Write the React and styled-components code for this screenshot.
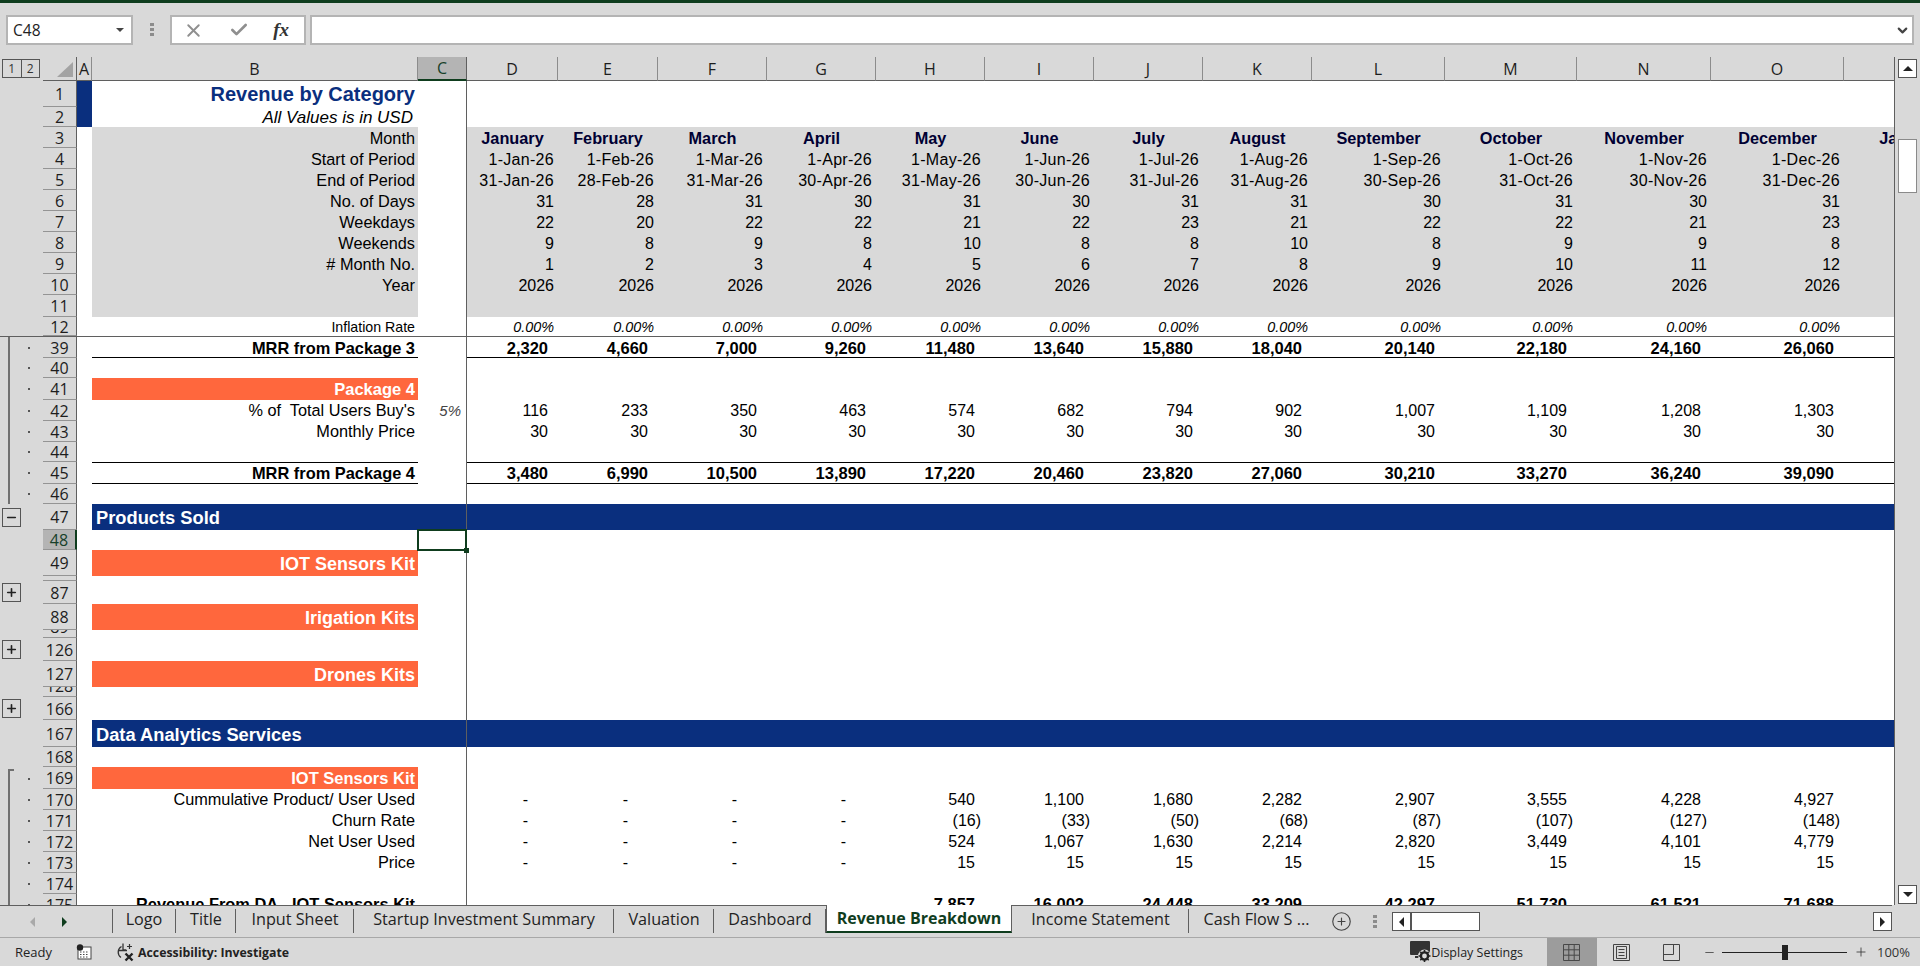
import React from "react"
import styled, { createGlobalStyle, css } from "styled-components"
import { X, Check, ChevronDown, CirclePlus, Plus, Minus } from "lucide-react"

const GREY = "#d9d9d9"
const NAVY = "#0a2f7e"
const ORANGE = "#ff673d"
const LINE = "#5f5f5f"
const DARK_GREEN = "#0f3d1e"

const COLS = [91, 100, 109, 109, 109, 109, 109, 109, 133, 132, 134, 133, 133]
const LETTERS = ["D", "E", "F", "G", "H", "I", "J", "K", "L", "M", "N", "O", ""]

const dash = ["-", "-", "-", "-"]
const r = (list) => list.map((v) => String(v))

const ROWS = [
  { n: 1, h: 26, a: NAVY, label: "Revenue by Category", kind: "title" },
  { n: 2, h: 20, nudge: true, a: NAVY, label: "All Values is in USD", kind: "note" },
  { n: 3, h: 21, nudge: true, fill: GREY, label: "Month", valueKind: "month",
    values: ["January", "February", "March", "April", "May", "June", "July", "August", "September", "October", "November", "December", "January"] },
  { n: 4, h: 21, nudge: true, fill: GREY, label: "Start of Period", valueKind: "date",
    values: ["1-Jan-26", "1-Feb-26", "1-Mar-26", "1-Apr-26", "1-May-26", "1-Jun-26", "1-Jul-26", "1-Aug-26", "1-Sep-26", "1-Oct-26", "1-Nov-26", "1-Dec-26"] },
  { n: 5, h: 21, nudge: true, fill: GREY, label: "End of Period", valueKind: "date",
    values: ["31-Jan-26", "28-Feb-26", "31-Mar-26", "30-Apr-26", "31-May-26", "30-Jun-26", "31-Jul-26", "31-Aug-26", "30-Sep-26", "31-Oct-26", "30-Nov-26", "31-Dec-26"] },
  { n: 6, h: 21, nudge: true, fill: GREY, label: "No. of Days", valueKind: "plain", values: r([31, 28, 31, 30, 31, 30, 31, 31, 30, 31, 30, 31]) },
  { n: 7, h: 21, nudge: true, fill: GREY, label: "Weekdays", valueKind: "plain", values: r([22, 20, 22, 22, 21, 22, 23, 21, 22, 22, 21, 23]) },
  { n: 8, h: 21, nudge: true, fill: GREY, label: "Weekends", valueKind: "plain", values: r([9, 8, 9, 8, 10, 8, 8, 10, 8, 9, 9, 8]) },
  { n: 9, h: 21, nudge: true, fill: GREY, label: "# Month No.", valueKind: "plain", values: r([1, 2, 3, 4, 5, 6, 7, 8, 9, 10, 11, 12]) },
  { n: 10, h: 21, nudge: true, fill: GREY, label: "Year", valueKind: "plain", values: Array(12).fill("2026") },
  { n: 11, h: 22, fill: GREY },
  { n: 12, h: 20, freeze: true, label: "Inflation Rate", kind: "small", valueKind: "rate", values: Array(12).fill("0.00%") },
  { n: 39, h: 21, nudge: true, dot: true, bar: true, label: "MRR from Package 3", kind: "bold", bottom: true, valueKind: "total",
    values: ["2,320", "4,660", "7,000", "9,260", "11,480", "13,640", "15,880", "18,040", "20,140", "22,180", "24,160", "26,060"] },
  { n: 40, h: 20, dot: true, bar: true },
  { n: 41, h: 22, dot: true, bar: true, label: "Package 4", kind: "band", labelFill: ORANGE },
  { n: 42, h: 21, dot: true, bar: true, label: "% of  Total Users Buy's", share: "5%", valueKind: "acct",
    values: ["116", "233", "350", "463", "574", "682", "794", "902", "1,007", "1,109", "1,208", "1,303"] },
  { n: 43, h: 21, dot: true, bar: true, label: "Monthly Price", valueKind: "acct", values: Array(12).fill("30") },
  { n: 44, h: 20, dot: true, bar: true },
  { n: 45, h: 22, dot: true, bar: true, label: "MRR from Package 4", kind: "bold", top: true, bottom: true, valueKind: "total",
    values: ["3,480", "6,990", "10,500", "13,890", "17,220", "20,460", "23,820", "27,060", "30,210", "33,270", "36,240", "39,090"] },
  { n: 46, h: 20, dot: true, bar: true },
  { n: 47, h: 26, nudge: true, box: "minus", fill: NAVY, label: "Products Sold", kind: "head" },
  { n: 48, h: 20, selected: true },
  { n: 49, h: 26, nudge: true, label: "IOT Sensors Kit", kind: "bigband", labelFill: ORANGE },
  { n: 50, h: 5 },
  { n: 87, h: 23, box: "plus" },
  { n: 88, h: 26, nudge: true, label: "Irigation Kits", kind: "bigband", labelFill: ORANGE },
  { n: 89, h: 8 },
  { n: 126, h: 23, box: "plus" },
  { n: 127, h: 26, nudge: true, label: "Drones Kits", kind: "bigband", labelFill: ORANGE },
  { n: 128, h: 10 },
  { n: 166, h: 23, box: "plus" },
  { n: 167, h: 27, nudge: true, fill: NAVY, label: "Data Analytics Services", kind: "head" },
  { n: 168, h: 20 },
  { n: 169, h: 22, dot: true, bar: true, barStart: true, label: "IOT Sensors Kit", kind: "band", labelFill: ORANGE },
  { n: 170, h: 21, dot: true, bar: true, label: "Cummulative Product/ User Used", valueKind: "acct",
    values: [...dash, "540", "1,100", "1,680", "2,282", "2,907", "3,555", "4,228", "4,927"] },
  { n: 171, h: 21, dot: true, bar: true, label: "Churn Rate", valueKind: "acct",
    values: [...dash, "(16)", "(33)", "(50)", "(68)", "(87)", "(107)", "(127)", "(148)"] },
  { n: 172, h: 21, dot: true, bar: true, label: "Net User Used", valueKind: "acct",
    values: [...dash, "524", "1,067", "1,630", "2,214", "2,820", "3,449", "4,101", "4,779"] },
  { n: 173, h: 21, dot: true, bar: true, label: "Price", valueKind: "acct", values: [...dash, ...Array(8).fill("15")] },
  { n: 174, h: 21, dot: true, bar: true },
  { n: 175, h: 21, dot: true, bar: true, label: "Revenue From DA - IOT Sensors Kit", kind: "bold", valueKind: "total",
    values: [...dash, "7,857", "16,002", "24,448", "33,209", "42,297", "51,730", "61,521", "71,688"] },
]

const TABS = [
  { name: "Logo", w: 64 },
  { name: "Title", w: 60 },
  { name: "Input Sheet", w: 118 },
  { name: "Startup Investment Summary", w: 260 },
  { name: "Valuation", w: 100 },
  { name: "Dashboard", w: 112 },
  { name: "Revenue Breakdown", w: 186, active: true },
  { name: "Income Statement", w: 177 },
  { name: "Cash Flow S ...", w: 135, last: true },
]

const Global = createGlobalStyle`
  html, body { margin: 0; padding: 0; height: 100%; overflow: hidden; background: ${GREY}; }
  * { box-sizing: border-box; }
`

const Window = styled.div`
  width: 1920px;
  height: 966px;
  display: flex;
  flex-direction: column;
  background: ${GREY};
  overflow: hidden;
  font-family: "Liberation Sans", Arial, sans-serif;
  border-top: 3px solid ${DARK_GREEN};
`

/* formula bar */
const FormulaRow = styled.div`
  height: 54px;
  flex: none;
  display: flex;
  align-items: flex-start;
  padding: 12px 6px 0;
`
const Field = styled.div`
  height: 30px;
  background: #fff;
  border: 2px solid #b4b4b4;
  display: flex;
  align-items: center;
`
const NameBox = styled(Field)`
  width: 127px;
  justify-content: space-between;
  padding: 0 7px 0 5px;
  font: 15.5px "Open Sans", sans-serif;
  color: #222;
`
const Caret = styled.i`
  width: 0;
  height: 0;
  border-left: 4px solid transparent;
  border-right: 4px solid transparent;
  border-top: 4px solid #444;
`
const Handle = styled.div`
  display: flex;
  flex-direction: column;
  gap: 2px;
  margin: ${(p) => p.$margin};
  i {
    display: block;
    width: 4px;
    height: 3px;
    background: #8c8c8c;
  }
`
const FxBox = styled(Field)`
  width: 136px;
  margin-left: 16px;
  justify-content: space-between;
  padding: 0 15px 0 11px;
  color: #8f8f8f;
`
const FxText = styled.span`
  font: italic bold 19px "Liberation Serif", serif;
  color: #333;
`
const FormulaInput = styled(Field)`
  flex: 1;
  margin-left: 4px;
  justify-content: flex-end;
  padding-right: 2px;
  color: #444;
`

/* sheet */
const SheetArea = styled.div`
  height: 848px;
  flex: none;
  display: flex;
`
const Sheet = styled.div`
  width: 1895px;
  position: relative;
  overflow: hidden;
  border-right: 1px solid ${LINE};
`
const HeaderRow = styled.div`
  display: flex;
  height: 24px;
`
const LevelArea = styled.div`
  width: 43px;
  flex: none;
  padding: 2px 0 0 2px;
`
const Levels = styled.div`
  width: 38px;
  height: 19px;
  display: flex;
  border: 1px solid #555;
  font: 12px "Open Sans", sans-serif;
  color: #333;
  span {
    flex: 1;
    text-align: center;
    line-height: 17px;
  }
  span + span {
    border-left: 1px solid #555;
  }
`
const Corner = styled.div`
  width: 34px;
  flex: none;
  border-bottom: 1px solid ${LINE};
  border-right: 1px solid ${LINE};
  padding: 5px 0 0 14px;
  i {
    display: block;
    width: 0;
    height: 0;
    border-left: 16px solid transparent;
    border-bottom: 15px solid #a3a3a3;
  }
`
const ColHead = styled.div`
  width: ${(p) => p.$w}px;
  flex: none;
  display: flex;
  align-items: center;
  justify-content: center;
  font: 16px "Open Sans", sans-serif;
  color: #1d1d1d;
  border-right: 1px solid #8c8c8c;
  border-bottom: 1px solid ${LINE};
  ${(p) =>
    p.$selected &&
    css`
      background: #b4b4b4;
      border-right-color: ${LINE};
      border-bottom: 2px solid ${DARK_GREEN};
      color: #17402a;
    `}
`

const GridRow = styled.div`
  display: flex;
  height: ${(p) => p.$h}px;
  ${(p) => p.$freeze && css`border-bottom: 1px solid ${LINE};`}
`
const Gutter = styled.div`
  width: 43px;
  flex: none;
  position: relative;
  display: flex;
  align-items: center;
`
const Track = styled.div`
  height: 100%;
  margin-left: 8px;
  padding-left: 18px;
  display: flex;
  align-items: center;
  ${(p) => p.$bar && css`border-left: 2px solid #707070;`}
  ${(p) =>
    p.$start &&
    css`
      margin-top: 2px;
      height: calc(100% - 2px);
      &::before {
        content: "";
        position: absolute;
        left: 8px;
        top: 2px;
        width: 6px;
        height: 2px;
        background: #707070;
      }
    `}
`
const Dot = styled.i`
  width: 2px;
  height: 2px;
  background: #555;
`
const OutlineBox = styled.div`
  width: 19px;
  height: 19px;
  margin-left: 2px;
  border: 1px solid #555;
  display: flex;
  align-items: center;
  justify-content: center;
  color: #222;
`
const RowNum = styled.div`
  width: 34px;
  flex: none;
  display: flex;
  justify-content: center;
  align-items: ${(p) => (p.$h < 15 ? "flex-end" : "center")};
  overflow: hidden;
  padding-top: ${(p) => (p.$h < 15 ? 0 : 1)}px;
  font: 16px/20px "Open Sans", sans-serif;
  color: #1d1d1d;
  border-right: 1px solid ${LINE};
  border-bottom: 1px solid #949494;
  ${(p) =>
    p.$selected &&
    css`
      background: #b4b4b4;
      border-right: 2px solid ${DARK_GREEN};
      color: #17402a;
    `}
`
const ColA = styled.div`
  width: 15px;
  flex: none;
  background: ${(p) => p.$fill || "#fff"};
`

const textKinds = {
  plain: css`font-size: 16.3px;`,
  bold: css`font-size: 16.4px; font-weight: 700;`,
  title: css`font-size: 20px; font-weight: 700; color: ${NAVY};`,
  note: css`font-size: 17px; font-style: italic; padding-right: 5px;`,
  small: css`font-size: 14.2px;`,
  band: css`font-size: 16.5px; font-weight: 700; color: #fff;`,
  bigband: css`font-size: 18px; font-weight: 700; color: #fff;`,
  head: css`font-size: 18.3px; font-weight: 700; color: #fff; justify-content: flex-start; padding-left: 4px; padding-right: 0;`,
}
const ruled = css`
  ${(p) => p.$top && css`border-top: 1px solid #000;`}
  ${(p) => p.$bottom && css`border-bottom: 1px solid #000;`}
  ${(p) => p.$nudge && css`padding-top: 2px;`}
`
const ColB = styled.div`
  width: 326px;
  flex: none;
  display: flex;
  align-items: center;
  justify-content: flex-end;
  padding-right: 3px;
  white-space: pre;
  color: #000;
  background: ${(p) => p.$fill || "#fff"};
  ${ruled}
  ${(p) => textKinds[p.$kind || "plain"]}
`
const ColC = styled.div`
  width: 49px;
  flex: none;
  position: relative;
  display: flex;
  align-items: center;
  justify-content: flex-end;
  padding-right: 5px;
  font-size: 15px;
  font-style: italic;
  color: #444;
  background: ${(p) => p.$fill || "#fff"};
  border-right: 1px solid ${LINE};
`
const Selection = styled.div`
  position: absolute;
  left: -1px;
  right: -1px;
  top: -1px;
  bottom: -1px;
  border: 2px solid ${DARK_GREEN};
  z-index: 2;
  &::after {
    content: "";
    position: absolute;
    right: -4px;
    bottom: -4px;
    width: 5px;
    height: 5px;
    background: ${DARK_GREEN};
  }
`
const valueKinds = {
  month: css`font-size: 16.3px; font-weight: 700; color: #000033; justify-content: center; padding-right: 0;`,
  date: css`letter-spacing: 0.3px; padding-right: 4px;`,
  plain: css`padding-right: 4px;`,
  rate: css`font-size: 14.4px; font-style: italic; padding-right: 4px;`,
  acct: css`padding-right: ${(p) => (p.$val === "-" ? 30 : p.$val?.startsWith("(") ? 4 : 10)}px;`,
  total: css`font-size: 16.5px; font-weight: 700; padding-right: ${(p) => (p.$val === "-" ? 30 : 10)}px;`,
}
const ValueCell = styled.div`
  width: ${(p) => p.$w}px;
  flex: none;
  display: flex;
  align-items: center;
  justify-content: flex-end;
  white-space: nowrap;
  font-size: 16px;
  color: #000;
  background: ${(p) => p.$fill || "#fff"};
  ${ruled}
  ${(p) => p.$kind && valueKinds[p.$kind]}
`

/* vertical scrollbar */
const VScroll = styled.div`
  flex: 1;
  position: relative;
  padding: 2px 3px 1px 3px;
  display: flex;
  flex-direction: column;
  align-items: center;
`
const ScrollBtn = styled.div`
  width: ${(p) => p.$w || 19}px;
  height: ${(p) => p.$h || 19}px;
  flex: none;
  background: #fff;
  border: 1px solid #555;
  display: flex;
  align-items: center;
  justify-content: center;
`
const Thumb = styled.div`
  width: 19px;
  height: 54px;
  margin-top: 61px;
  background: #fff;
  border: 1px solid #8a8a8a;
`
const Arrow = styled.i`
  width: 0;
  height: 0;
  ${(p) =>
    p.$dir === "up" &&
    css`
      border-left: 5px solid transparent;
      border-right: 5px solid transparent;
      border-bottom: 5px solid ${p.$color || "#222"};
    `}
  ${(p) =>
    p.$dir === "down" &&
    css`
      border-left: 5px solid transparent;
      border-right: 5px solid transparent;
      border-top: 5px solid ${p.$color || "#222"};
    `}
  ${(p) =>
    p.$dir === "left" &&
    css`
      border-top: 5px solid transparent;
      border-bottom: 5px solid transparent;
      border-right: 5px solid ${p.$color || "#222"};
    `}
  ${(p) =>
    p.$dir === "right" &&
    css`
      border-top: 5px solid transparent;
      border-bottom: 5px solid transparent;
      border-left: 5px solid ${p.$color || "#222"};
    `}
`
const Spacer = styled.div`
  flex: 1;
`

/* tabs */
const TabBar = styled.div`
  height: 32px;
  flex: none;
  display: flex;
  align-items: flex-start;
  padding-right: 28px;
`
const SheetNav = styled.div`
  width: 112px;
  height: 100%;
  flex: none;
  display: flex;
  align-items: center;
  padding-left: 30px;
  gap: 27px;
  border-top: 1px solid ${LINE};
`
const Tab = styled.div`
  width: ${(p) => p.$w}px;
  height: 100%;
  flex: none;
  font: 16.2px/27px "Open Sans", sans-serif;
  color: #222;
  text-align: center;
  white-space: nowrap;
  position: relative;
  border-top: 1px solid ${LINE};
  ${(p) =>
    !p.$active &&
    !p.$last &&
    css`
      &::after {
        content: "";
        position: absolute;
        right: 0;
        top: 3px;
        height: 24px;
        width: 1px;
        background: ${LINE};
      }
    `}
  ${(p) =>
    p.$first &&
    css`
      &::before {
        content: "";
        position: absolute;
        left: 0;
        top: 3px;
        height: 24px;
        width: 1px;
        background: ${LINE};
      }
    `}
  ${(p) =>
    p.$active &&
    css`
      height: 28px;
      background: #fff;
      border-top: 0;
      border-left: 1px solid ${LINE};
      border-right: 1px solid ${LINE};
      border-bottom: 2px solid ${DARK_GREEN};
      color: ${DARK_GREEN};
      font-weight: 700;
      font-size: 16px;
    `}
`
const TabTools = styled.div`
  flex: 1;
  height: 100%;
  display: flex;
  align-items: center;
  border-top: 1px solid ${LINE};
  padding-left: 7px;
  color: #444;
`
const HTrack = styled.div`
  flex: 1;
  display: flex;
  align-items: center;
  justify-content: space-between;
  margin-left: 15px;
`
const HThumb = styled.div`
  display: flex;
  height: 19px;
  width: 88px;
  background: #fff;
  border: 1px solid #555;
`
const HThumbBtn = styled.div`
  width: 19px;
  display: flex;
  align-items: center;
  justify-content: center;
  border-right: 2px solid #555;
`

/* status bar */
const StatusBar = styled.div`
  flex: 1;
  display: flex;
  align-items: center;
  border-top: 1px solid #a8a8a8;
  padding-left: 15px;
  font: 13px "Open Sans", sans-serif;
  color: #222;
`
const StatusIcon = styled.span`
  display: flex;
  margin-left: ${(p) => p.$ml || 0}px;
  color: #333;
`
const A11yText = styled.span`
  margin-left: 3px;
  font-weight: 700;
  font-size: 12.3px;
`
const SettingsText = styled.span`
  font-size: 12.5px;
`
const ViewButton = styled.div`
  width: ${(p) => p.$w}px;
  height: 100%;
  display: flex;
  align-items: center;
  justify-content: center;
  ${(p) => p.$active && css`background: #9c9c9c;`}
`
const Zoomer = styled.div`
  width: 125px;
  height: 1px;
  background: #222;
  position: relative;
  margin: 0 7px 0 6px;
  &::after {
    content: "";
    position: absolute;
    left: 60px;
    top: -7px;
    width: 6px;
    height: 15px;
    background: #222;
  }
`

const MacroIcon = () => (
  <svg width="16" height="16" viewBox="0 0 16 16" fill="none">
    <rect x="2" y="3" width="13" height="12" fill="#fff" stroke="#444" />
    <path d="M4 8h9M4 10.5h9M4 13h9" stroke="#444" strokeDasharray="1.5 1.5" />
    <circle cx="4" cy="3.5" r="3.2" fill="#222" />
  </svg>
)
const A11yIcon = () => (
  <svg width="20" height="20" viewBox="0 0 20 20" fill="none" stroke="#333">
    <path d="M6.5 4.5A6.5 6.5 0 0 0 6 15.5" strokeWidth="1.3" />
    <path d="M8 1.5v6.5h3M4 8.5h8" strokeWidth="1.3" />
    <path d="M12 4.5h5M14.5 2v5" strokeWidth="1.2" />
    <path d="M10.5 11.5l7 7M17.5 11.5l-7 7" strokeWidth="2.4" stroke="#222" />
  </svg>
)
const MonitorIcon = () => (
  <svg width="21" height="22" viewBox="0 0 21 22">
    <rect x="0" y="0" width="20" height="14" rx="1" fill="#333" />
    <rect x="5" y="15" width="6" height="2" fill="#333" />
    <circle cx="14.5" cy="15" r="6.5" fill="#d9d9d9" />
    <circle cx="14.5" cy="15" r="3.6" fill="none" stroke="#222" strokeWidth="2.4" />
    <path d="M14.5 9v2M14.5 19v2M8.5 15h2M18.5 15h2M10.3 10.8l1.4 1.4M17.3 17.8l1.4 1.4M10.3 19.2l1.4-1.4M17.3 12.2l1.4-1.4" stroke="#222" strokeWidth="1.6" />
  </svg>
)
const GridIcon = () => (
  <svg width="17" height="17" viewBox="0 0 17 17" fill="none" stroke="#484848">
    <path d="M.5.5h16v16H.5zM5.8.5v16M11.2.5v16M.5 5.8h16M.5 11.2h16" />
  </svg>
)
const PageIcon = () => (
  <svg width="17" height="17" viewBox="0 0 17 17" fill="none" stroke="#444">
    <path d="M.5.5h16v16H.5z" />
    <path d="M3.5 2.5h10v12h-10zM5.5 5.5h6M5.5 8.5h6M5.5 11.5h6" />
  </svg>
)
const BreakIcon = () => (
  <svg width="17" height="17" viewBox="0 0 17 17" fill="none" stroke="#444">
    <path d="M.5.5h16v16H.5zM.5 10.5h10V.5" />
  </svg>
)

function OutlineCell({ row }) {
  if (row.box) {
    return (
      <OutlineBox>
        {row.box === "plus" ? <Plus size={13} strokeWidth={3} /> : <Minus size={13} strokeWidth={3} />}
      </OutlineBox>
    )
  }
  return (
    <Track $bar={row.bar} $start={row.barStart}>
      {row.dot && <Dot />}
    </Track>
  )
}

function SheetRow({ row }) {
  const lines = { $top: row.top, $bottom: row.bottom, $nudge: row.nudge }
  return (
    <GridRow $h={row.h} $freeze={row.freeze}>
      <Gutter>
        <OutlineCell row={row} />
      </Gutter>
      <RowNum $h={row.h} $selected={row.selected}>{row.n}</RowNum>
      <ColA $fill={row.a} />
      <ColB $fill={row.labelFill || row.fill} $kind={row.kind} {...lines}>{row.label}</ColB>
      <ColC $fill={row.fill === NAVY ? NAVY : undefined}>
        {row.share}
        {row.selected && <Selection />}
      </ColC>
      {COLS.map((w, i) => (
        <ValueCell key={i} $w={w} $fill={row.fill} $kind={row.valueKind} $val={row.values?.[i]} {...lines}>
          {row.values?.[i]}
        </ValueCell>
      ))}
    </GridRow>
  )
}

function App() {
  return (
    <Window>
      <Global />
      <FormulaRow>
        <NameBox>
          C48
          <Caret />
        </NameBox>
        <Handle $margin="8px 0 0 17px"><i /><i /><i /></Handle>
        <FxBox>
          <X size={21} strokeWidth={2.2} />
          <Check size={20} strokeWidth={3.2} />
          <FxText>fx</FxText>
        </FxBox>
        <FormulaInput>
          <ChevronDown size={15} strokeWidth={3.5} />
        </FormulaInput>
      </FormulaRow>

      <SheetArea>
        <Sheet>
          <HeaderRow>
            <LevelArea>
              <Levels><span>1</span><span>2</span></Levels>
            </LevelArea>
            <Corner><i /></Corner>
            <ColHead $w={15}>A</ColHead>
            <ColHead $w={326}>B</ColHead>
            <ColHead $w={49} $selected>C</ColHead>
            {COLS.map((w, i) => (
              <ColHead key={i} $w={w}>{LETTERS[i]}</ColHead>
            ))}
          </HeaderRow>
          {ROWS.map((row) => (
            <SheetRow key={row.n} row={row} />
          ))}
        </Sheet>
        <VScroll>
          <ScrollBtn><Arrow $dir="up" /></ScrollBtn>
          <Thumb />
          <Spacer />
          <ScrollBtn><Arrow $dir="down" /></ScrollBtn>
        </VScroll>
      </SheetArea>

      <TabBar>
        <SheetNav>
          <Arrow $dir="left" $color="#a9a9a9" />
          <Arrow $dir="right" $color={DARK_GREEN} />
        </SheetNav>
        {TABS.map((t, i) => (
          <Tab key={t.name} $w={t.w} $active={t.active} $last={t.last} $first={i === 0}>{t.name}</Tab>
        ))}
        <TabTools>
          <CirclePlus size={21} strokeWidth={1.3} />
          <Handle $margin="0 0 0 21px"><i /><i /><i /></Handle>
          <HTrack>
            <HThumb>
              <HThumbBtn><Arrow $dir="left" /></HThumbBtn>
            </HThumb>
            <ScrollBtn $w={19} $h={19}><Arrow $dir="right" /></ScrollBtn>
          </HTrack>
        </TabTools>
      </TabBar>

      <StatusBar>
        Ready
        <StatusIcon $ml={24}><MacroIcon /></StatusIcon>
        <StatusIcon $ml={23}><A11yIcon /></StatusIcon>
        <A11yText>Accessibility: Investigate</A11yText>
        <Spacer />
        <StatusIcon><MonitorIcon /></StatusIcon>
        <SettingsText>Display Settings</SettingsText>
        <StatusIcon $ml={24} />
        <ViewButton $w={50} $active><GridIcon /></ViewButton>
        <ViewButton $w={50}><PageIcon /></ViewButton>
        <ViewButton $w={50}><BreakIcon /></ViewButton>
        <StatusIcon $ml={6}><Minus size={13} strokeWidth={1.4} /></StatusIcon>
        <Zoomer />
        <StatusIcon><Plus size={14} strokeWidth={1.4} /></StatusIcon>
        <StatusIcon $ml={9}>100%</StatusIcon>
        <StatusIcon $ml={10} />
      </StatusBar>
    </Window>
  )
}

export default App
